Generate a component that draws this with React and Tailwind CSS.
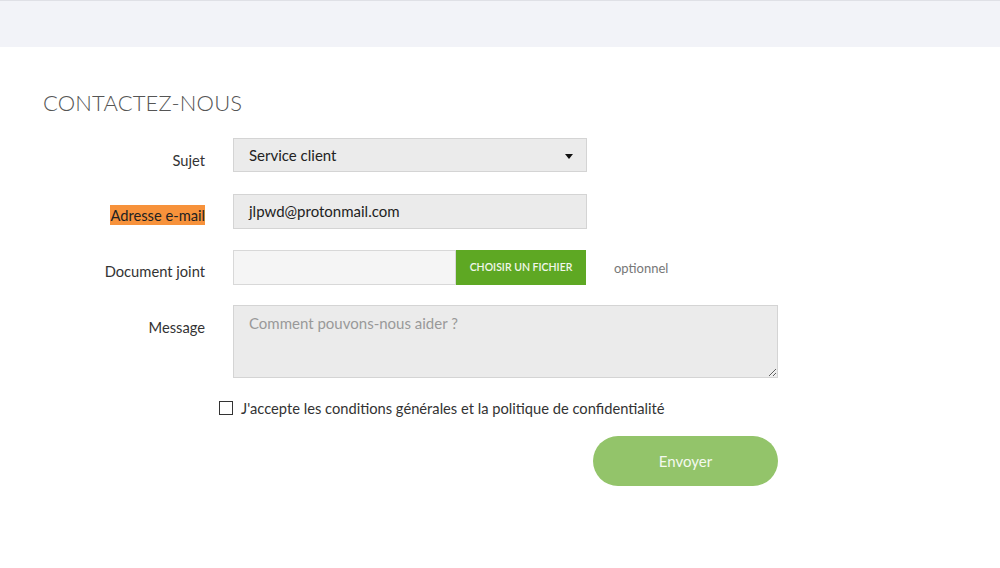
import { useState } from 'react';

const font = { fontFamily: 'Lato, "Open Sans", sans-serif' };

function Row({ label, highlight, children, labelPad = 'pt-[12px]' }) {
  return (
    <div className="flex items-start">
      <div className={`w-[162px] shrink-0 text-right text-[14.7px] leading-[20px] text-[#333] ${labelPad}`}>
        <span className={highlight ? 'bg-[#f7923b] py-[1px] text-[#222]' : ''}>{label}</span>
      </div>
      <div className="ml-[28px] flex items-center">{children}</div>
    </div>
  );
}

export default function App() {
  const [accepted, setAccepted] = useState(false);

  return (
    <div className="min-h-[568px] w-[1000px] bg-white" style={font}>
      {/* Top bar */}
      <div className="h-[47px] border-t border-[#dfe0e6] bg-[#f2f3f8]" />

      <div className="pl-[43px] pt-[43px]">
        <h1 className="text-[22px] font-light leading-[26px] tracking-[0.15px] text-[#555]">
          CONTACTEZ-NOUS
        </h1>

        <div className="mt-[22px] flex flex-col">
          {/* Sujet */}
          <Row label="Sujet" labelPad="pt-[12px]">
            <div className="relative flex h-[34px] w-[354px] items-center border border-[#d4d4d4] bg-[#ebebeb] pl-[15px] text-[15px] text-[#222]">
              Service client
              <svg className="absolute right-[13px] top-[15px]" width="8" height="5" viewBox="0 0 8 5">
                <path d="M0 0h8L4 5z" fill="#111" />
              </svg>
            </div>
          </Row>

          {/* Email */}
          <div className="mt-[22px]">
            <Row label="Adresse e-mail" highlight labelPad="pt-[11px]">
              <div className="flex h-[35px] w-[354px] items-center border border-[#d4d4d4] bg-[#ebebeb] pl-[15px] text-[15px] text-[#222]">
                jlpwd@protonmail.com
              </div>
            </Row>
          </div>

          {/* Document joint */}
          <div className="mt-[21px]">
            <Row label="Document joint" labelPad="pt-[11px]">
              <div className="flex h-[35px] w-[353px]">
                <div className="h-full w-[223px] border border-[#d8d8d8] bg-[#f5f5f5]" />
                <button className="h-full flex-1 bg-[#5ea823] text-[10.5px] font-semibold text-[#f1f7ec]">
                  CHOISIR UN FICHIER
                </button>
              </div>
              <span className="ml-[28px] pt-[2px] text-[13px] text-[#777]">optionnel</span>
            </Row>
          </div>

          {/* Message */}
          <div className="mt-[20px]">
            <Row label="Message" labelPad="pt-[12px]">
              <textarea
                placeholder="Comment pouvons-nous aider ?"
                className="block h-[73px] w-[545px] border border-[#d4d4d4] bg-[#ebebeb] px-[15px] pt-[6px] text-[15px] text-[#222] placeholder:text-[#999] outline-none"
                style={font}
              />
            </Row>
          </div>

          {/* Checkbox */}
          <label className="ml-[176px] mt-[19px] flex items-center gap-[8px] text-[14.7px] leading-[20px] text-[#333]">
            <span
              onClick={() => setAccepted(!accepted)}
              className="inline-block h-[14px] w-[14px] border border-[#333] bg-white"
            />
            <span className="pt-[1px]">J'accepte les conditions générales et la politique de confidentialité</span>
          </label>

          {/* Envoyer */}
          <div className="ml-[550px] mt-[18px]">
            <button className="h-[50px] w-[185px] rounded-full bg-[#93c46a] text-[15px] text-[#f4f9ef]">
              Envoyer
            </button>
          </div>
        </div>
      </div>
    </div>
  );
}
